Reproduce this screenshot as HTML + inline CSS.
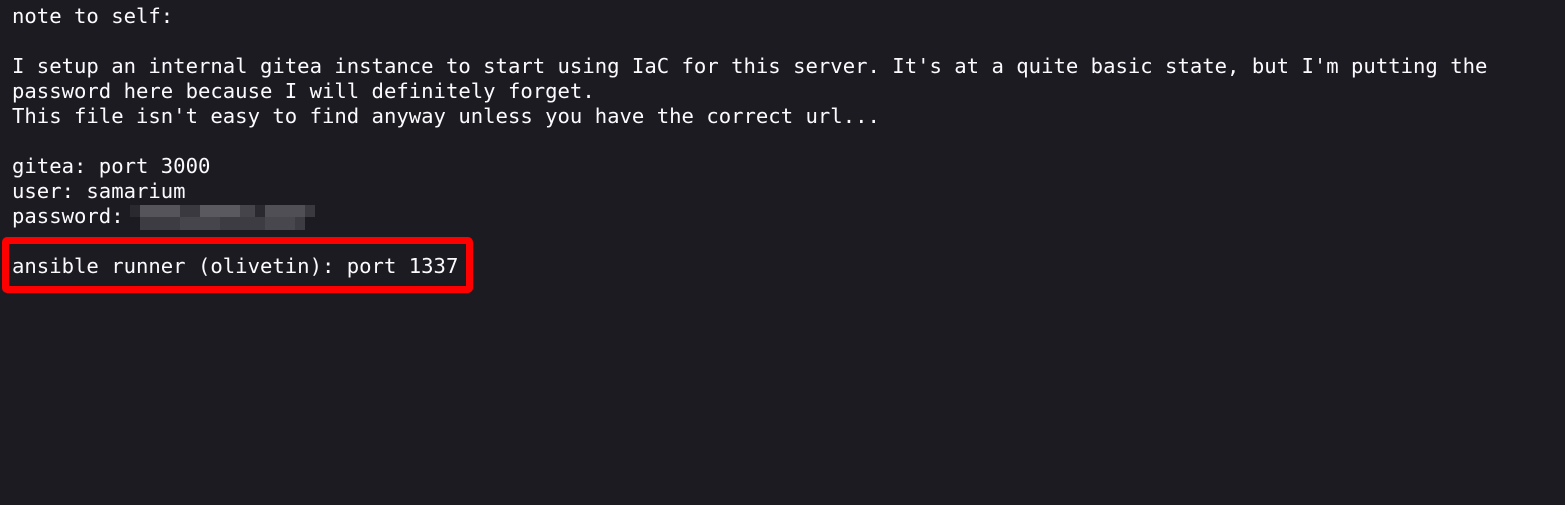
<!DOCTYPE html>
<html><head><style>
html,body{margin:0;padding:0;background:#1c1b22;width:1565px;height:505px;overflow:hidden}
pre{margin:0;position:absolute;left:12px;top:4px;font-family:"DejaVu Sans Mono","Liberation Mono",monospace;font-size:20.6px;line-height:25px;color:#fbfbfe;white-space:pre}
.box{position:absolute;left:2px;top:237px;width:457px;height:42px;border:7px solid #f00;border-radius:5px}
.px{position:absolute;height:12px}
</style></head><body>
<pre>note to self:

I setup an internal gitea instance to start using IaC for this server. It's at a quite basic state, but I'm putting the
password here because I will definitely forget.
This file isn't easy to find anyway unless you have the correct url...

gitea: port 3000
user: samarium
password:

ansible runner (olivetin): port 1337</pre>
<div class="box"></div>
<div class="px" style="left:130px;top:205px;width:10px;background:#2a2930"></div>
<div class="px" style="left:140px;top:205px;width:40px;background:#55545a"></div>
<div class="px" style="left:180px;top:205px;width:20px;background:#3a3940"></div>
<div class="px" style="left:200px;top:205px;width:40px;background:#5a595f"></div>
<div class="px" style="left:240px;top:205px;width:15px;background:#45444a"></div>
<div class="px" style="left:255px;top:205px;width:10px;background:#2a2930"></div>
<div class="px" style="left:265px;top:205px;width:40px;background:#504f56"></div>
<div class="px" style="left:305px;top:205px;width:10px;background:#3a3940"></div>
<div class="px" style="left:140px;top:217px;width:165px;height:13px;background:#3d3c43"></div>
<div class="px" style="left:180px;top:217px;width:40px;height:13px;background:#46454c"></div>
<div class="px" style="left:265px;top:217px;width:30px;height:13px;background:#48474e"></div>
</body></html>
